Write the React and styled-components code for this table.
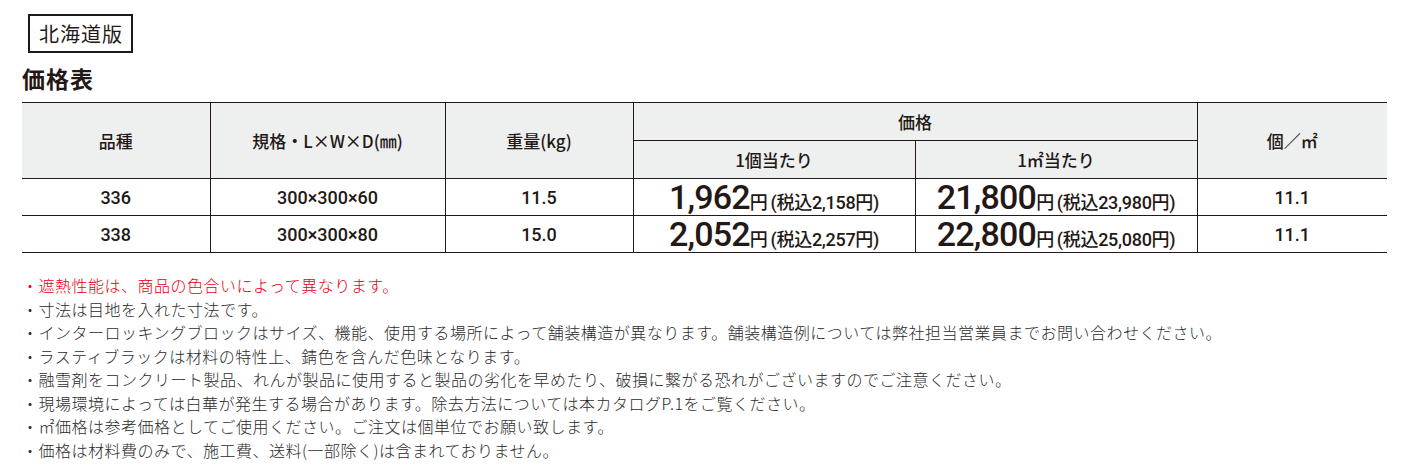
import styled, { createGlobalStyle } from "styled-components";

const GlobalStyle = createGlobalStyle`
  body {
    margin: 0;
    background: #ffffff;
    font-family: "Noto Sans CJK JP", "Noto Sans", sans-serif;
    color: #231815;
  }
`;

const Page = styled.div`
  padding: 14px 19px 0 22px;
`;

const Badge = styled.div`
  display: inline-block;
  margin-left: 6px;
  padding: 0 8px 0 9px;
  height: 35px;
  line-height: 35px;
  border: 2px solid #1a1a1a;
  font-size: 20px;
  font-weight: 400;
  letter-spacing: 1px;
`;

const Heading = styled.h2`
  margin: 10px 0 0;
  font-size: 23px;
  line-height: 30px;
  font-weight: 700;
  letter-spacing: 1px;
`;

const PriceTable = styled.table`
  margin-top: 9px;
  width: 1365px;
  border-collapse: collapse;
  table-layout: fixed;
  border-top: 1px solid #231815;
  border-bottom: 1px solid #231815;
`;

const Row = styled.tr`
  height: ${({ $h }) => $h}px;
  border-bottom: 1px solid #231815;
`;

const HeadCell = styled.th`
  background: #eeefef;
  padding: 0;
  font-family: "Noto Sans CJK JP", sans-serif;
  font-size: 17px;
  font-weight: 500;
  text-align: center;
  vertical-align: middle;
  border-left: ${({ $first }) => ($first ? "none" : "1px solid #231815")};
  border-bottom: 1px solid #231815;
`;

const Cell = styled.td`
  padding: 0;
  text-align: center;
  vertical-align: middle;
  font-family: Roboto, "Noto Sans CJK JP", sans-serif;
  font-size: 18px;
  font-weight: 500;
  border-left: ${({ $first }) => ($first ? "none" : "1px solid #231815")};
  white-space: nowrap;
`;

const BigPrice = styled.span`
  font-family: Roboto, sans-serif;
  font-size: 34px;
  line-height: 34px;
  font-weight: 500;
  letter-spacing: -0.8px;
`;

const TaxNote = styled.span`
  font-family: Roboto, "Noto Sans CJK JP", sans-serif;
  font-size: 18px;
  font-weight: 500;
  letter-spacing: -0.3px;
`;

const Yen = styled.span`
  margin-right: 3px;
`;

const NoteList = styled.ul`
  margin: 21px 0 0;
  padding: 0;
  list-style: none;
`;

const Note = styled.li`
  font-size: 16px;
  line-height: 23.5px;
  font-weight: 300;
  letter-spacing: 0.5px;
  color: ${({ $alert }) => ($alert ? "#e60012" : "#2b2b2b")};
  white-space: nowrap;
`;

const cols = [188, 235, 188, 282, 282, 190];

const rows = [
  {
    code: "336",
    size: "300×300×60",
    weight: "11.5",
    unit: "1,962",
    unitTax: "2,158",
    area: "21,800",
    areaTax: "23,980",
    perArea: "11.1",
  },
  {
    code: "338",
    size: "300×300×80",
    weight: "15.0",
    unit: "2,052",
    unitTax: "2,257",
    area: "22,800",
    areaTax: "25,080",
    perArea: "11.1",
  },
];

const notes = [
  "遮熱性能は、商品の色合いによって異なります。",
  "寸法は目地を入れた寸法です。",
  "インターロッキングブロックはサイズ、機能、使用する場所によって舗装構造が異なります。舗装構造例については弊社担当営業員までお問い合わせください。",
  "ラスティブラックは材料の特性上、錆色を含んだ色味となります。",
  "融雪剤をコンクリート製品、れんが製品に使用すると製品の劣化を早めたり、破損に繋がる恐れがございますのでご注意ください。",
  "現場環境によっては白華が発生する場合があります。除去方法については本カタログP.1をご覧ください。",
  "㎡価格は参考価格としてご使用ください。ご注文は個単位でお願い致します。",
  "価格は材料費のみで、施工費、送料(一部除く)は含まれておりません。",
];

function Price({ value, tax }) {
  return (
    <>
      <BigPrice>{value}</BigPrice>
      <TaxNote>
        <Yen>円</Yen>(税込{tax}円)
      </TaxNote>
    </>
  );
}

export default function App() {
  return (
    <>
      <GlobalStyle />
      <Page>
        <Badge>北海道版</Badge>
        <Heading>価格表</Heading>

        <PriceTable>
          <colgroup>
            {cols.map((w, i) => (
              <col key={i} style={{ width: w }} />
            ))}
          </colgroup>
          <thead>
            <Row $h={38}>
              <HeadCell rowSpan={2} $first>品種</HeadCell>
              <HeadCell rowSpan={2}>規格・L×W×D(㎜)</HeadCell>
              <HeadCell rowSpan={2}>重量(kg)</HeadCell>
              <HeadCell colSpan={2}>価格</HeadCell>
              <HeadCell rowSpan={2}>個／㎡</HeadCell>
            </Row>
            <Row $h={38}>
              <HeadCell>1個当たり</HeadCell>
              <HeadCell>1㎡当たり</HeadCell>
            </Row>
          </thead>
          <tbody>
            {rows.map((r) => (
              <Row key={r.code} $h={37}>
                <Cell $first>{r.code}</Cell>
                <Cell>{r.size}</Cell>
                <Cell>{r.weight}</Cell>
                <Cell>
                  <Price value={r.unit} tax={r.unitTax} />
                </Cell>
                <Cell>
                  <Price value={r.area} tax={r.areaTax} />
                </Cell>
                <Cell>{r.perArea}</Cell>
              </Row>
            ))}
          </tbody>
        </PriceTable>

        <NoteList>
          {notes.map((n, i) => (
            <Note key={i} $alert={i === 0}>
              ・{n}
            </Note>
          ))}
        </NoteList>
      </Page>
    </>
  );
}
